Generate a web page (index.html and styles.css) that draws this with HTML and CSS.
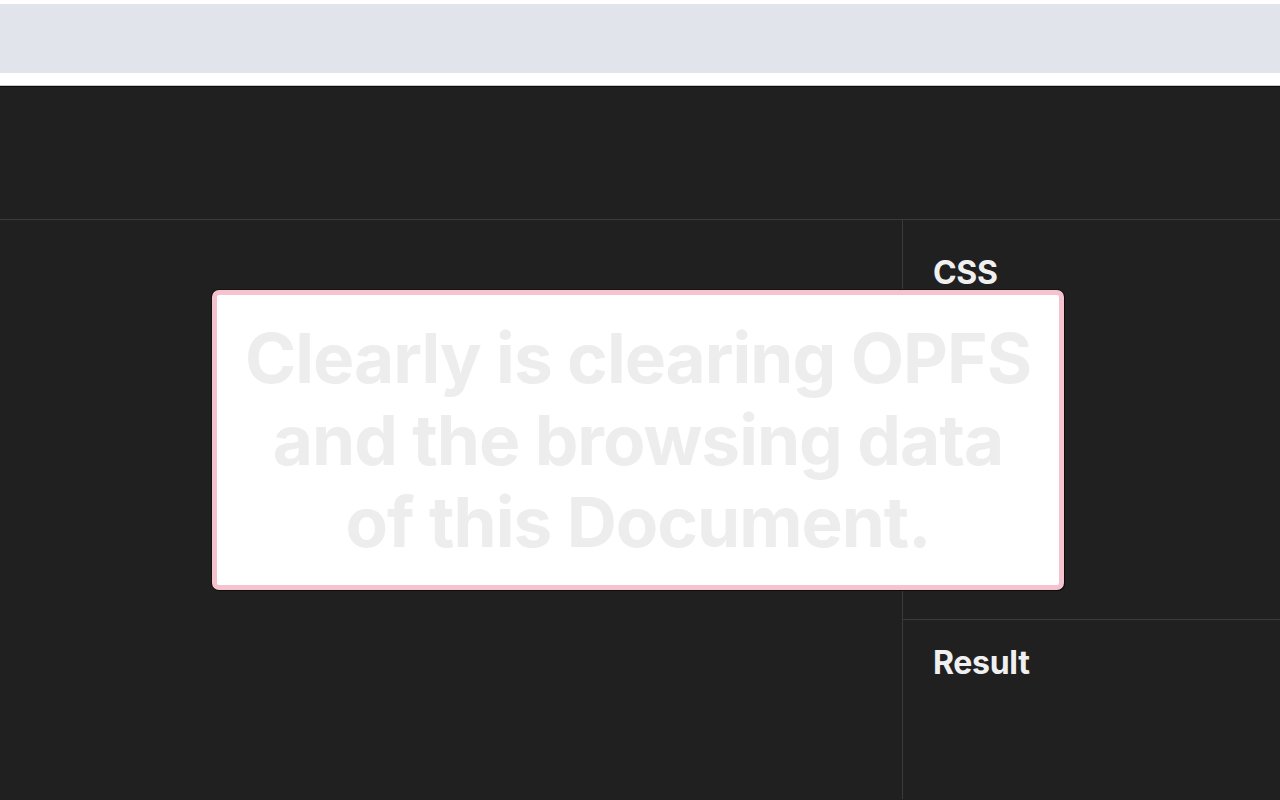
FILE: index.html
```html
<!DOCTYPE html>
<html lang="en">
<head>
<meta charset="utf-8">
<title>Clearly</title>
<link rel="stylesheet" href="styles.css">
</head>
<body>
<div class="topstrip">
  <div class="addressbar"></div>
</div>
<div class="app">
  <header class="header"></header>
  <main class="main">
    <section class="editor"></section>
    <aside class="side">
      <div class="panel css-panel"><h2 class="panel-title">CSS</h2></div>
      <div class="panel result-panel"><h2 class="panel-title">Result</h2></div>
    </aside>
  </main>
</div>
<div class="modal">
  <p class="modal-text">Clearly is clearing OPFS and the browsing data of this Document.</p>
</div>
</body>
</html>
```

FILE: styles.css
```css
* { box-sizing: border-box; }
html, body { margin: 0; padding: 0; height: 100%; }
body {
  font-family: Inter, "Noto Sans", "Liberation Sans", sans-serif;
  background: #202020;
  overflow: hidden;
}
.topstrip {
  background: #ffffff;
  padding-top: 4px;
  height: 86px;
  border-bottom: 1px solid #c9c9c9;
}
.addressbar {
  height: 69px;
  background: #e2e4ec;
}
.app {
  border-top: 1px solid #0c0c0c;
  height: 713px;
  display: flex;
  flex-direction: column;
}
.header {
  height: 133px;
  border-bottom: 1px solid #3a3a3a;
  flex: none;
}
.main {
  flex: 1;
  display: flex;
}
.editor {
  width: 903px;
  border-right: 1px solid #3a3a3a;
}
.side {
  flex: 1;
  display: flex;
  flex-direction: column;
}
.panel { padding: 0 30px; }
.css-panel {
  height: 400px;
  border-bottom: 1px solid #3a3a3a;
  padding-top: 33px;
}
.result-panel { padding-top: 23px; }
.panel-title {
  margin: 0;
  font-size: 32px;
  font-weight: 700;
  line-height: 40px;
  color: #f0f0f0;
  letter-spacing: -0.3px;
}
.modal {
  position: absolute;
  left: 212px;
  top: 290px;
  width: 852px;
  height: 300px;
  background: #ffffff;
  border: 5px solid #f4c3cd;
  border-radius: 7px;
  box-shadow: 1px 1px 0 0 #0c0c0c, 0 0 0 1px #141414;
  display: flex;
  align-items: center;
  justify-content: center;
}
.modal-text {
  margin: 0;
  text-align: center;
  font-size: 69.3px;
  font-weight: 700;
  line-height: 82px;
  color: #ededed;
  letter-spacing: -1px;
  padding: 0 24px;
}
```
